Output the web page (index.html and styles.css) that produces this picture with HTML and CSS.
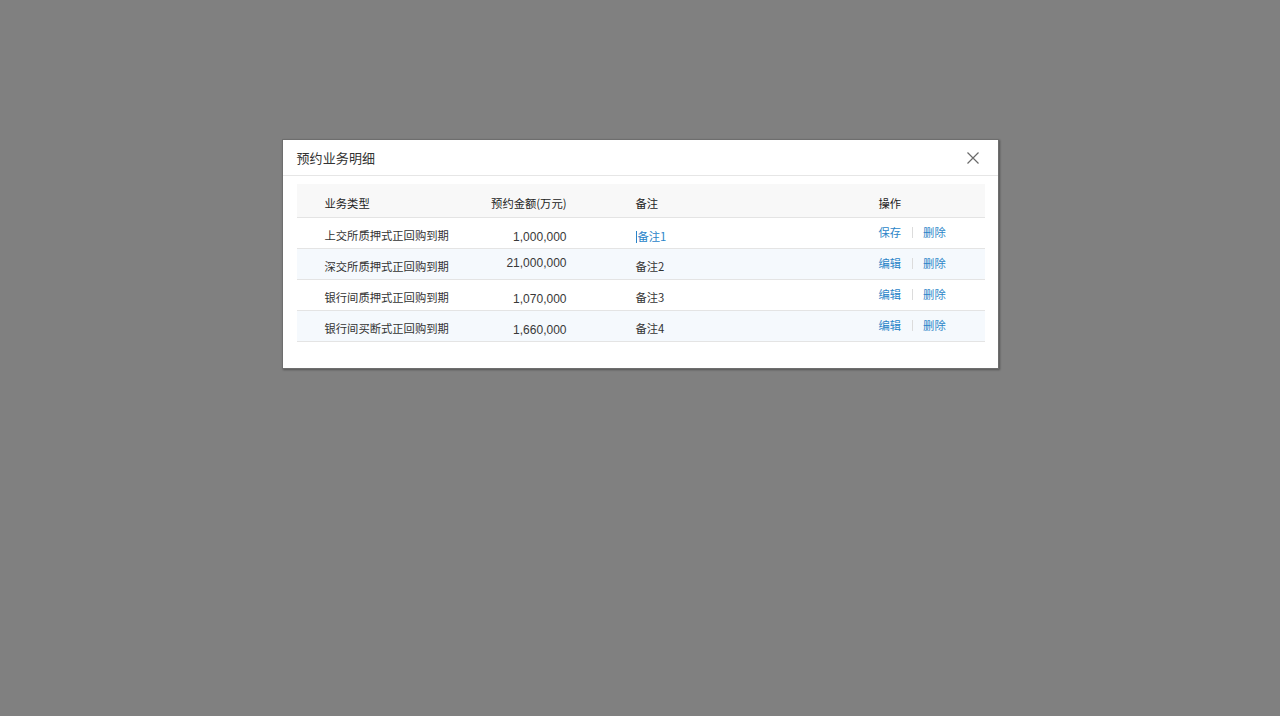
FILE: index.html
```html
<!DOCTYPE html>
<html lang="zh-CN">
<head>
<meta charset="utf-8">
<title>预约业务明细</title>
<link rel="stylesheet" href="styles.css">
</head>
<body>
<div class="modal">
  <div class="modal-header">
    <span class="modal-title">预约业务明细</span>
    <span class="close" aria-label="关闭">
      <svg width="12" height="12" viewBox="0 0 12 12"><path d="M0.5 0.5 L11.5 11.5 M11.5 0.5 L0.5 11.5" stroke="#6a6a6a" stroke-width="1.2" fill="none"/></svg>
    </span>
  </div>
  <div class="modal-body">
    <table class="grid">
      <colgroup>
        <col class="c1"><col class="c2"><col class="c3"><col class="c4">
      </colgroup>
      <thead>
        <tr><th class="t1">业务类型</th><th class="t2">预约金额(万元)</th><th class="t3">备注</th><th class="t4">操作</th></tr>
      </thead>
      <tbody>
        <tr>
          <td class="t1 cjk">上交所质押式正回购到期</td>
          <td class="t2 num">1,000,000</td>
          <td class="t3 cjk editing"><span class="caret"></span>备注1</td>
          <td class="t4 ops"><a>保存</a><span class="sep"></span><a>删除</a></td>
        </tr>
        <tr class="alt">
          <td class="t1 cjk">深交所质押式正回购到期</td>
          <td class="t2 num high">21,000,000</td>
          <td class="t3 cjk">备注2</td>
          <td class="t4 ops"><a>编辑</a><span class="sep"></span><a>删除</a></td>
        </tr>
        <tr>
          <td class="t1 cjk">银行间质押式正回购到期</td>
          <td class="t2 num">1,070,000</td>
          <td class="t3 cjk">备注3</td>
          <td class="t4 ops"><a>编辑</a><span class="sep"></span><a>删除</a></td>
        </tr>
        <tr class="alt">
          <td class="t1 cjk">银行间买断式正回购到期</td>
          <td class="t2 num">1,660,000</td>
          <td class="t3 cjk">备注4</td>
          <td class="t4 ops"><a>编辑</a><span class="sep"></span><a>删除</a></td>
        </tr>
      </tbody>
    </table>
  </div>
</div>
</body>
</html>
```

FILE: styles.css
```css
html, body {
  margin: 0;
  padding: 0;
}
body {
  background: #808080;
  height: 716px;
  overflow: hidden;
  font-family: "Noto Sans CJK SC", "Liberation Sans", sans-serif;
  color: #333;
}
.modal {
  width: 717px;
  box-sizing: border-box;
  margin: 139px auto 0;
  background: #fff;
  border: 1px solid #6e6e6e;
  box-shadow: 1px 1px 2px rgba(0, 0, 0, 0.35);
}
.modal-header {
  height: 35px;
  border-bottom: 1px solid #e6e6e6;
  display: flex;
  align-items: center;
  justify-content: space-between;
  padding: 0 19px 0 14px;
}
.modal-title {
  font-size: 13px;
  line-height: 16px;
  color: #333;
  letter-spacing: 0.1px;
  margin-top: 1px;
}
.close {
  display: flex;
  width: 12px;
  height: 12px;
  margin-top: 1px;
}
.modal-body {
  padding: 8px 13px 26px 14px;
}
.grid {
  width: 688px;
  border-collapse: collapse;
  table-layout: fixed;
  font-size: 11.3px;
  line-height: 14px;
}
.c1 { width: 170px; }
.c2 { width: 100px; }
.c3 { width: 312px; }
.c4 { width: 106px; }
.grid th {
  height: 33px;
  box-sizing: border-box;
  padding: 5px 0 0;
  background: #f8f8f8;
  font-weight: normal;
  color: #222;
  border-bottom: 1px solid #e4e4e4;
  vertical-align: middle;
  text-align: left;
}
.grid td {
  height: 31px;
  box-sizing: border-box;
  padding: 5px 0 0;
  border-bottom: 1px solid #e4e4e4;
  vertical-align: middle;
  color: #333;
  white-space: nowrap;
}
.grid tr.alt td {
  background: #f5f9fd;
}
.t1 { padding-left: 28px !important; }
.grid .t2 { text-align: right; }
.t3 { padding-left: 69px !important; }
.num {
  font-family: "Liberation Sans", sans-serif;
  font-size: 12px;
  color: #383838 !important;
}
.grid td.num {
  padding-top: 9px;
}
.grid td.high {
  padding: 0 0 1px;
}
.grid td.editing {
  color: #2a84c9;
  padding-top: 7px;
}
.caret {
  display: inline-block;
  width: 1px;
  height: 12px;
  background: #2a84c9;
  margin-right: 1px;
  vertical-align: -2px;
}
.grid td.ops {
  padding: 0 0 1px;
}
.ops a {
  color: #2b85c8;
  cursor: pointer;
}
.sep {
  display: inline-block;
  width: 1px;
  height: 11px;
  background: #dcdcdc;
  margin: 0 10px 0 11px;
  vertical-align: -1px;
}
```
